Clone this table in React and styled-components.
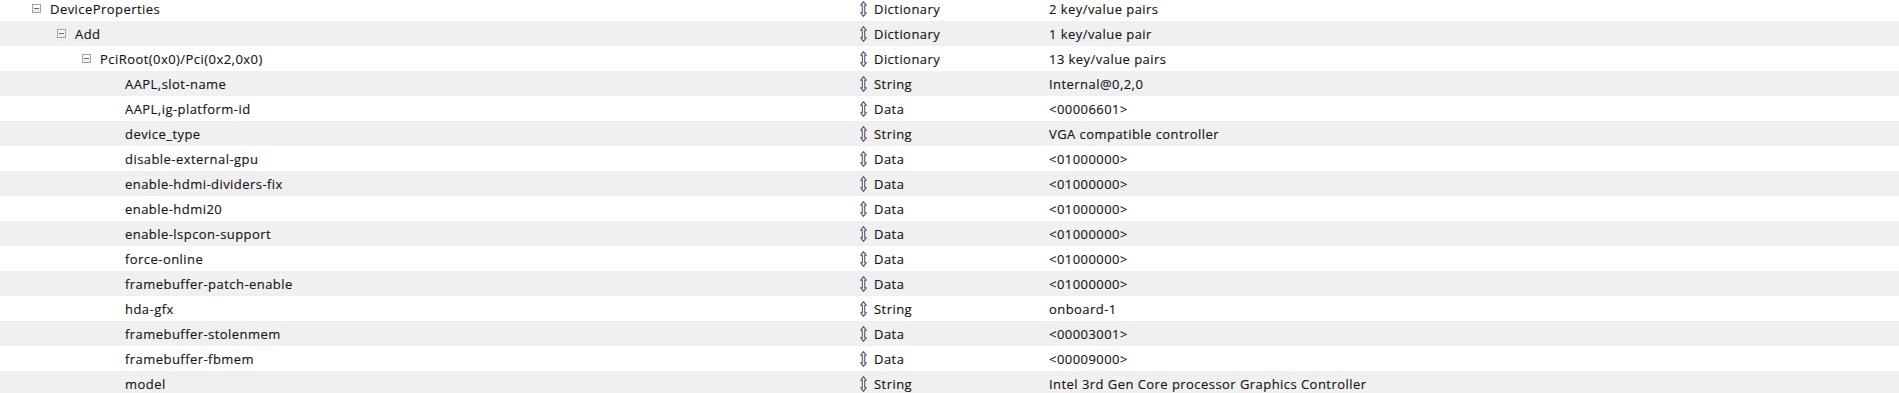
import React from 'react';
import styled, { createGlobalStyle } from 'styled-components';

// ============================================
// DATA
// ============================================

const rows = [
  { key: 'DeviceProperties', level: 0, open: true, type: 'Dictionary', value: '2 key/value pairs' },
  { key: 'Add', level: 1, open: true, type: 'Dictionary', value: '1 key/value pair' },
  { key: 'PciRoot(0x0)/Pci(0x2,0x0)', level: 2, open: true, type: 'Dictionary', value: '13 key/value pairs' },
  { key: 'AAPL,slot-name', level: 3, type: 'String', value: 'Internal@0,2,0' },
  { key: 'AAPL,ig-platform-id', level: 3, type: 'Data', value: '<00006601>' },
  { key: 'device_type', level: 3, type: 'String', value: 'VGA compatible controller' },
  { key: 'disable-external-gpu', level: 3, type: 'Data', value: '<01000000>' },
  { key: 'enable-hdmi-dividers-fix', level: 3, type: 'Data', value: '<01000000>' },
  { key: 'enable-hdmi20', level: 3, type: 'Data', value: '<01000000>' },
  { key: 'enable-lspcon-support', level: 3, type: 'Data', value: '<01000000>' },
  { key: 'force-online', level: 3, type: 'Data', value: '<01000000>' },
  { key: 'framebuffer-patch-enable', level: 3, type: 'Data', value: '<01000000>' },
  { key: 'hda-gfx', level: 3, type: 'String', value: 'onboard-1' },
  { key: 'framebuffer-stolenmem', level: 3, type: 'Data', value: '<00003001>' },
  { key: 'framebuffer-fbmem', level: 3, type: 'Data', value: '<00009000>' },
  { key: 'model', level: 3, type: 'String', value: 'Intel 3rd Gen Core processor Graphics Controller' },
];

// ============================================
// STYLED COMPONENTS
// ============================================

const GlobalStyle = createGlobalStyle`
  html, body {
    margin: 0;
    padding: 0;
    background: #ffffff;
    overflow: hidden;
  }
`;

const Tree = styled.div`
  width: 1899px;
  margin-top: -4px;
  font-family: "Open Sans", "Liberation Sans", sans-serif;
  font-size: 13px;
  letter-spacing: 0.45px;
  color: #161616;
  -webkit-text-stroke: 0.15px #161616;
`;

const Row = styled.div`
  display: grid;
  grid-template-columns: 855px 194px 1fr;
  align-items: center;
  height: 25px;
  background: ${props => props.striped ? '#f0f0f0' : '#ffffff'};
`;

const KeyCell = styled.div`
  display: flex;
  align-items: center;
  gap: 9px;
  padding-left: ${props => 32 + props.level * 25}px;
  white-space: nowrap;
`;

const Toggle = styled.span`
  box-sizing: border-box;
  width: 9px;
  height: 9px;
  border: 1px solid #a2a2a2;
  background: linear-gradient(#ffffff, #ebebeb);
  display: flex;
  align-items: center;
  justify-content: center;
  flex: none;

  &::after {
    content: '';
    width: 5px;
    height: 1px;
    background: #55688c;
  }
`;

const Spacer = styled.span`
  width: 9px;
  flex: none;
`;

const TypeCell = styled.div`
  display: flex;
  align-items: center;
  gap: 7px;
  padding-left: 5px;
`;

const ValueCell = styled.div`
  white-space: nowrap;
`;

// ============================================
// REACT
// ============================================

const UpDown = () => (
  <svg width="7" height="16" viewBox="0 0 7 16">
    <path
      d="M3.5 0.6 L6.4 4.3 L4.7 4.3 L4.7 11.7 L6.4 11.7 L3.5 15.4 L0.6 11.7 L2.3 11.7 L2.3 4.3 L0.6 4.3 Z"
      fill="#f3f1f6"
      stroke="#5e5672"
      strokeWidth="1.1"
      strokeLinejoin="round"
    />
  </svg>
);

const App = () => (
  <>
    <GlobalStyle />
    <Tree>
      {rows.map((row, i) => (
        <Row key={row.key} striped={i % 2 === 1}>
          <KeyCell level={row.level}>
            {row.open ? <Toggle /> : <Spacer />}
            <span>{row.key}</span>
          </KeyCell>
          <TypeCell>
            <UpDown />
            <span>{row.type}</span>
          </TypeCell>
          <ValueCell>{row.value}</ValueCell>
        </Row>
      ))}
    </Tree>
  </>
);

export default App;
